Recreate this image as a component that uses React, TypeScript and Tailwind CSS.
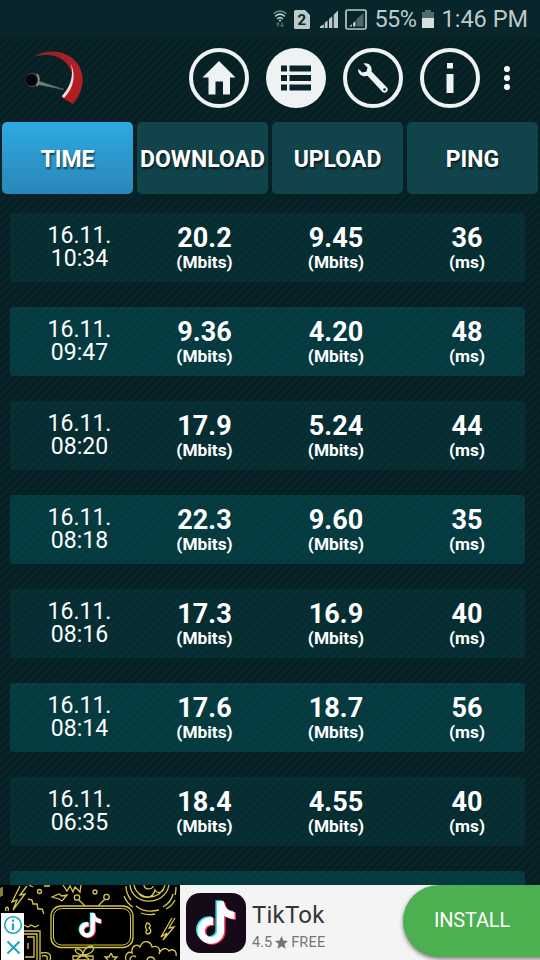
import * as React from "react";
import clsx from "clsx";

interface Result {
  date: string;
  time: string;
  download: string;
  upload: string;
  ping: string;
}

const results: Result[] = [
  { date: "16.11.", time: "10:34", download: "20.2", upload: "9.45", ping: "36" },
  { date: "16.11.", time: "09:47", download: "9.36", upload: "4.20", ping: "48" },
  { date: "16.11.", time: "08:20", download: "17.9", upload: "5.24", ping: "44" },
  { date: "16.11.", time: "08:18", download: "22.3", upload: "9.60", ping: "35" },
  { date: "16.11.", time: "08:16", download: "17.3", upload: "16.9", ping: "40" },
  { date: "16.11.", time: "08:14", download: "17.6", upload: "18.7", ping: "56" },
  { date: "16.11.", time: "06:35", download: "18.4", upload: "4.55", ping: "40" },
];

const tabs = ["TIME", "DOWNLOAD", "UPLOAD", "PING"];

const NOTE =
  "M12.53.02C13.84 0 15.14.01 16.44 0c.08 1.53.63 3.09 1.75 4.17 1.12 1.11 2.7 1.62 4.24 1.79v4.03c-1.44-.05-2.89-.35-4.2-.97-.57-.26-1.1-.59-1.62-.93-.01 2.92.01 5.84-.02 8.75-.08 1.4-.54 2.79-1.35 3.94-1.31 1.92-3.58 3.17-5.91 3.21-1.43.08-2.86-.31-4.08-1.03-2.02-1.19-3.44-3.37-3.65-5.71-.02-.5-.03-1-.01-1.49.18-1.9 1.12-3.72 2.58-4.96 1.66-1.44 3.98-2.13 6.15-1.72.02 1.48-.04 2.96-.04 4.44-.99-.32-2.15-.23-3.02.37-.63.41-1.11 1.04-1.36 1.75-.21.51-.15 1.07-.14 1.61.24 1.64 1.82 3.02 3.5 2.87 1.12-.01 2.19-.66 2.77-1.61.19-.33.4-.67.41-1.06.1-1.79.06-3.57.07-5.36.01-4.03-.01-8.05.02-12.07z";

function StatusBar() {
  return (
    <div className="flex h-[38px] items-center justify-end bg-[#07252a] pr-3 text-[#bccaca]">
      <svg className="mr-[6px] h-6 w-[16px]" viewBox="0 0 18 24" fill="none" stroke="currentColor" strokeWidth="1.7">
        <path d="M2 6Q9 0 16 6" stroke="#7b9092" />
        <path d="M3.6 9Q9 4 14.4 9M5.8 12Q9 9 12.2 12" />
        <circle cx="9" cy="13.8" r="1.2" fill="currentColor" stroke="none" />
        <path d="M6.6 21v-4.6M11.4 15.5v4.6M4.8 18l1.8-2 1.8 2M9.6 18.6l1.8 2 1.8-2" stroke="#4f6668" strokeWidth="1.4" />
      </svg>
      <svg className="mr-[10px] h-[19px] w-[16px]" viewBox="0 0 16 19">
        <path d="M1.5 0H11l5 5v12.5a1.5 1.5 0 0 1-1.5 1.5h-13A1.5 1.5 0 0 1 0 17.5V1.5A1.5 1.5 0 0 1 1.5 0z" fill="currentColor" />
        <text x="7.8" y="15" textAnchor="middle" fontFamily="Roboto, sans-serif" fontSize="15" fontWeight="700" fill="#07252a">
          2
        </text>
      </svg>
      <svg className="mr-[7px] h-[19px] w-[18px]" viewBox="0 0 19 19" fill="currentColor">
        <path d="M0 18.5V17l4-2.5v4zM5 13l3-2.5v8H5zM9.5 9l3.500-3v12.500H9.500zM14.500 4.500L19 0v18.500h-4.500z" />
      </svg>
      <svg className="mr-[7px] h-[21px] w-[22px]" viewBox="0 0 22 21" fill="none">
        <rect x="1" y="1" width="20" height="19" rx="1.5" stroke="currentColor" strokeWidth="1.7" />
        <path d="M11.5 10L18.5 4v13.500h-7z" fill="#51696b" />
        <path d="M4 17.5l3-2.300v2.300zM8 14l2.500-2v5.500H8z" fill="currentColor" />
      </svg>
      <span className="mr-[5px] text-[23.5px] leading-[38px] tracking-[-0.5px]">55%</span>
      <svg className="mr-[8px] h-[18px] w-[12px]" viewBox="0 0 12 18">
        <path d="M3 0h6v2h3v7H0V2h3z" fill="#53696b" />
        <path d="M0 8h12v10H0z" fill="#d5dfdf" />
      </svg>
      <span className="text-[23.5px] leading-[38px]">1:46 PM</span>
    </div>
  );
}

function Logo() {
  return (
    <svg className="h-[60px] w-[66px]" viewBox="22 48 66 60">
      <defs>
        <linearGradient id="arc" x1="0" x2="1" y1="0" y2="1">
          <stop offset="0" stopColor="#8f2023" />
          <stop offset="0.6" stopColor="#b51f25" />
          <stop offset="1" stopColor="#ad1a20" />
        </linearGradient>
      </defs>
      <path d="M34 57C42 51 55 50 65 54C80 60 86 76 81 90C79 96 76 100 73 104L61 97C69 91 75 83 72 73C68 59 53 51 34 57Z" fill="url(#arc)" />
      <path d="M71 64C76 75 74 88 64 98L62 96C70 87 74 77 71 64Z" fill="#f4dfe0" />
      <path d="M38 81L64 89.500L38 84.500Z" fill="#7a8384" stroke="#566466" strokeWidth="0.8" />
      <ellipse cx="32.5" cy="80" rx="7" ry="7.3" fill="#3c4444" />
      <path d="M37 74Q41 79 37 86" stroke="#8d9191" strokeWidth="1.6" fill="none" />
      <ellipse cx="31.5" cy="80" rx="5.6" ry="6" fill="#030606" />
    </svg>
  );
}

function RoundButton({ active, label, children }: { active?: boolean; label: string; children: React.ReactNode }) {
  return (
    <button
      type="button"
      aria-label={label}
      className={clsx(
        "flex h-[60px] w-[60px] items-center justify-center rounded-full",
        active ? "bg-[#eef2f2]" : "border-[4.5px] border-[#eef2f2]"
      )}
    >
      {children}
    </button>
  );
}

function Header() {
  return (
    <header className="flex h-[84px] items-center pr-[30px] pb-1 pl-[22px]">
      <Logo />
      <nav className="ml-auto flex shrink-0 items-center gap-[17px]">
        <RoundButton label="Home">
          <svg className="h-9 w-9 shrink-0" viewBox="0 0 36 36" fill="#eef2f2">
            <path d="M18 1L34.500 17.500H29V34.500H22V21.500H14.500V34.500H7.500V17.500H1.500Z" />
          </svg>
        </RoundButton>
        <RoundButton label="Results" active>
          <svg className="h-[26px] w-[30px]" viewBox="0 0 30 26" fill="#082428">
            <path d="M0 0.500h6v6H0zM8.500 0.500H30v6H8.500zM0 10h6v6H0zM8.500 10H30v6H8.500zM0 19.500h6v6H0zM8.500 19.500H30v6H8.500z" />
          </svg>
        </RoundButton>
        <RoundButton label="Settings">
          <svg className="h-8 w-8 shrink-0" viewBox="0 0 32 32">
            <path
              d="M6.500 1.500C11.500 0 15.500 4 14.500 9.500L30 25.500C32.500 28.500 28.500 32.500 25.500 30L10.500 13.800C5.500 15.500 0.500 12 1.200 7L5.500 10.500L9.500 9.500L10.500 5.500Z"
              fill="#eef2f2"
            />
            <circle cx="27.500" cy="27.500" r="1.300" fill="#082428" />
          </svg>
        </RoundButton>
        <RoundButton label="Info">
          <svg className="h-[30px] w-[8px]" viewBox="0 0 8 30" fill="#eef2f2">
            <path d="M1 0h6v5.500H1zM0.500 11h7v19h-7z" />
          </svg>
        </RoundButton>
      </nav>
      <button type="button" aria-label="More" className="ml-[24px] flex flex-col gap-[3px]">
        <span className="h-[6px] w-[6px] rounded-full bg-white" />
        <span className="h-[6px] w-[6px] rounded-full bg-white" />
        <span className="h-[6px] w-[6px] rounded-full bg-white" />
      </button>
    </header>
  );
}

function Metric({ value, unit, className }: { value: string; unit: string; className?: string }) {
  return (
    <div className={clsx("pt-[11px] text-center font-bold", className)}>
      <div className="text-[27px] leading-[28px]">{value}</div>
      <div className={clsx("text-[17.3px]", "leading-[20px]")}>{unit}</div>
    </div>
  );
}

function ResultRow({ result, even }: { result?: Result; even: boolean }) {
  return (
    <div
      className={clsx(
        "grid h-[69px] shrink-0 grid-cols-[130px_129px_134px_122px] rounded-[4px]",
        even ? "bg-[#007c84]/28" : "bg-[#007c84]/14"
      )}
    >
      {result && (
        <>
          <div className="pt-[11px] pl-[9px] text-center text-[23px] leading-[23px]">
            {result.date}
            <br />
            {result.time}
          </div>
          <Metric value={result.download} unit="(Mbits)" />
          <Metric value={result.upload} unit="(Mbits)" />
          <Metric value={result.ping} unit="(ms)" className="pl-[6px]" />
        </>
      )}
    </div>
  );
}

function Doodles() {
  return (
    <svg className="h-[75px] w-[180px]" viewBox="0 0 180 75" fill="none" stroke="#d9c84a" strokeWidth="1.3">
      <rect width="180" height="75" fill="#000" stroke="none" />
      <path d="M20 1L12 17L17 15L13 25L25 9L20 10L27 1M28 14l4 1 1 4 4 0 1 5 4 0 2 5" />
      <path d="M0 3v9M2 2v9M29 0l4 2M44 1h6M52 12l7-3 3 2 5-1-5 6-3-2zM63 0l4 6 3-5 3 6 2-5 5 5 1-7" />
      <circle cx="39.5" cy="6.5" r="2" />
      <circle cx="95" cy="7" r="2" />
      <circle cx="77" cy="12.5" r="2.7" />
      <circle cx="106.5" cy="12" r="2.7" />
      <path d="M79 15l6 6M104.500 14.500l-6 6" />
      <path d="M130 0C132 21 165 22 169 0M134 0C137 15 160 17 165 0M139 9c5 5 14 5 16-4 2 4 7 3 9-1M144 0c0 5 9 5 9 1" />
      <path d="M126 1c0 5 2 10 5 14M124 11c2 5 5 9 9 11M136 21c6 5 15 6 23 4M141 28c5 2 10 2 14 1M163 22c5-3 9-8 10-13M166 24c4-2 7-5 9-9M176 2c0 3 0 5-1 8" />
      <rect x="51" y="21" width="82" height="41.5" rx="10" />
      <rect x="53.5" y="23.5" width="77" height="36.5" rx="8" strokeWidth="1" />
      <path d="M172 33L161 52L167 48L163 55L174 42L169 43L175 33M147 38c4 1 4 3 2 5 3 2 2 6-2 6-2-2-1-3 0-4-3-3-1-5 0-7zM6 26c-2-5 4-5 2 0M24 40l4 2 3-2 4 2 4-2" />
      <path d="M24 46h16v29M24 49h13v26M27 52h7v20h-9M28 58v6M41 68c7-1 11 0 9 7M42 71c4-1 6 0 5 4" />
      <path d="M83 70c-8-1-10-7-5-6 3 0 5 3 5 6 0-6 7-11 10-8 2 4-4 8-10 8zM73 71h20v4H73zM83 70l-6 4M83 70l6 4M111 68l2 4 4 0-3 3M111 68l-2 4-4 0 3 3" />
      <path d="M126 75c-2-6 3-9 6-7-1-7 5-10 8-6 3-8 11-6 12 0 6-2 9 2 7 7 2-6 8-7 10-3 4-3 8 0 7 5M130 75c0-4 4-5 6-3M147 75c1-4 6-4 8 0" />
      <g stroke="none" transform="translate(78 28) scale(1.02)">
        <path d={NOTE} fill="#25f4ee" transform="translate(-1 -0.5)" />
        <path d={NOTE} fill="#fe2c55" transform="translate(1 0.7)" />
        <path d={NOTE} fill="#fff" />
      </g>
    </svg>
  );
}

function AdBanner() {
  return (
    <footer className="relative flex h-[75px] shrink-0 items-center overflow-hidden bg-[#f4f4f5]">
      <Doodles />
      <div className="absolute top-[28px] left-[1px] flex h-[47px] w-[23px] flex-col items-center bg-white">
        <svg className="h-[46px] w-[22px]" viewBox="0 0 22 46" fill="none" stroke="#20a4be" strokeWidth="1.6">
          <circle cx="11" cy="12" r="8.3" />
          <path d="M11 10.500V17M11 6.500V8.700" strokeWidth="2.3" />
          <path d="M5.500 28.500l12 12M17.500 28.500l-12 12" strokeWidth="2" />
        </svg>
      </div>
      <svg className="ml-[6px] h-[60px] w-[60px]" viewBox="0 0 60 60">
        <rect width="60" height="60" rx="14" fill="#170a18" />
        <g transform="translate(8.5 8) scale(1.77)">
          <path d={NOTE} fill="#25e8e0" transform="translate(-0.7 -0.4)" />
          <path d={NOTE} fill="#e92c50" transform="translate(1 0.7)" />
          <path d={NOTE} fill="#fff" transform="translate(0.2 0.2)" />
        </g>
      </svg>
      <div className="ml-[6px] pt-[11px]">
        <div className="text-[24px] leading-[29px] tracking-[0.2px] text-[#353535]">TikTok</div>
        <div className="flex items-center gap-[3px] text-[14.5px] leading-[25px] text-[#757575]">
          4.5
          <svg className="h-[13px] w-[13px]" viewBox="0 0 24 24" fill="currentColor">
            <path d="M12 0l3.500 8.300 8.500.7-6.500 5.900 2 8.600L12 18.700l-7.500 4.800 2-8.600L0 9l8.500-.7z" />
          </svg>
          <span className="tracking-[0.2px]">FREE</span>
        </div>
      </div>
      <button
        type="button"
        className="absolute top-0 left-[403px] h-[72px] w-[160px] rounded-l-full bg-[#4caf50] pr-[22px] pb-[2px] text-center text-[20px] tracking-[-0.2px] text-white shadow-[0_2px_4px_rgba(0,0,0,0.5)]"
      >
        INSTALL
      </button>
    </footer>
  );
}

export default function App() {
  return (
    <div className="flex h-[960px] w-[540px] flex-col overflow-hidden bg-[#082429] bg-[repeating-linear-gradient(135deg,rgba(0,0,0,0.14)_0px,rgba(0,0,0,0.14)_2px,transparent_3px,transparent_5px,rgba(0,0,0,0.14)_6px)] font-['Roboto',sans-serif] text-white">
      <StatusBar />
      <Header />
      <div className="grid shrink-0 grid-cols-4 gap-1 px-[2px]">
        {tabs.map((tab, i) => (
          <button
            key={tab}
            type="button"
            className={clsx(
              "h-[72px] rounded-[5px] pt-[5px] text-center text-[23px] font-bold [text-shadow:1px_2px_2px_rgba(0,0,0,0.6)]",
              i === 0 ? "bg-linear-to-b from-[#2fa9e2] to-[#2987b8]" : "bg-[#11434b]"
            )}
          >
            {tab}
          </button>
        ))}
      </div>
      <main className="flex min-h-0 flex-1 flex-col gap-[25px] overflow-hidden pt-[19px] pr-[15px] pl-[10px]">
        {results.map((result, i) => (
          <ResultRow key={result.time} result={result} even={i % 2 === 1} />
        ))}
        <ResultRow even />
      </main>
      <AdBanner />
    </div>
  );
}
